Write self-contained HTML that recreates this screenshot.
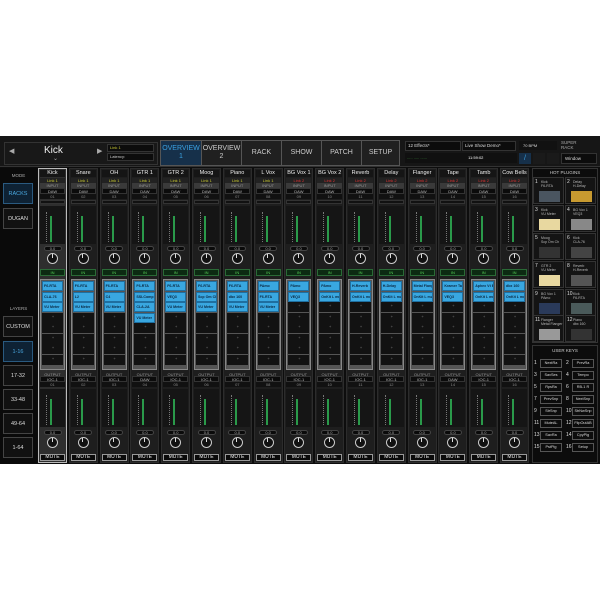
<!DOCTYPE html>
<html><head><meta charset="utf-8"><style>
*{box-sizing:border-box;margin:0;padding:0}
body{width:600px;height:600px;background:#fff;font-family:"Liberation Sans",sans-serif;position:relative;overflow:hidden;color:#ddd}
#app{position:absolute;left:0;top:136px;width:600px;height:328px;background:#0d0d0d}
.abs{position:absolute}
#top{position:absolute;left:0;top:0;width:600px;height:31px;background:#161616;border-bottom:1px solid #333}
.tab{position:absolute;top:5px;height:24px;font-size:7px;color:#ccc;text-align:center;line-height:24px;border-left:1px solid #555}
.mode{position:absolute;left:3px;width:30px;height:21px;border:1px solid #444;font-size:5.5px;text-align:center;line-height:20px;color:#ddd;background:#111}
#strips{position:absolute;left:38px;top:32px;width:494px;height:296px}
.s{position:absolute;top:0;width:29px;height:295px;background:#1e1e1e;border:1px solid #2c2c2c}
.s.sel{background:#2e2e2e;border:1px solid #bbb}
.s>div{position:absolute;left:1px;right:1px;text-align:center;font-size:4px;line-height:5px;white-space:nowrap;overflow:hidden}
.nm{top:1px;height:7px;font-size:5.5px!important;line-height:7px!important;color:#eee;background:#151515}
.lk{top:9px;height:5px;color:#cc3;background:#222}
.lk.r{color:#d33}
.in{top:14px;height:5px;color:#999;background:#3a3a3a}
.dd{top:19px;height:6px;color:#bbb;background:#0b0b0b;border:1px solid #333}
.no{top:25px;height:5px;color:#888;background:#111}
.sm{top:31px;height:4px;background:#111;border:1px solid #333}
.mt{top:37px;height:38px;background:#151515}
.mt i{position:absolute;left:6px;top:6px;width:2px;height:30px;border-left:1px dotted #777}
.mt b{position:absolute;left:10px;top:10px;width:2px;height:26px;background:#2a9a4a}
.pl{height:5px}
.pl span{display:inline-block;width:18px;height:5px;border-radius:3px;background:#0a0a0a;border:1px solid #444;color:#aaa;font-size:4px;line-height:4px}
.kn{height:12px;overflow:visible!important}
.kn span{display:inline-block;width:11px;height:11px;border-radius:50%;border:1.5px solid #ccc;background:#111;position:relative}
.kn span:after{content:"";position:absolute;left:3.5px;top:0;width:1px;height:4px;background:#ddd}
.on{top:100px;height:7px;background:#0c2a12;border:1px solid #2a6a36;color:#5c5!important;line-height:5px!important}
.pg{top:110px;height:91px;background:#555;border:1px solid #888;padding:1px}
.pg b,.pg u{display:block;height:10px;margin-bottom:0.5px;text-decoration:none;font-weight:bold;font-size:3.6px;line-height:9px;text-align:left;padding-left:1px;white-space:nowrap;overflow:hidden}
.pg b{background:#39a7e0;color:#0b2740;border:1px solid #1f6fa0}
.pg u{background:#121212;color:#555;text-align:center}
.out{top:203px;height:4px;color:#999}
.d2{top:207px}
.n2{top:213px}
.m2{top:220px}
.p2{top:261px}
.k2{top:268px}
.mu{top:285px;height:7px;background:#0a0a0a;border:1px solid #999;color:#eee!important;font-size:5px!important;line-height:5px!important}
#rp{position:absolute;left:532px;top:32px;width:66px;height:295px}
.hp{position:absolute;width:31px;height:27px;background:#141414;border:1px solid #333}
.hp em{position:absolute;left:1px;top:1px;font-style:normal;font-size:5px;color:#ddd}
.hp i{position:absolute;left:7px;top:2px;font-style:normal;font-size:3.5px;color:#bbb;line-height:4px;white-space:nowrap}
.hp s{position:absolute;left:5px;top:13px;width:21px;height:11px}
.uk{position:absolute;height:11px;font-size:5px;line-height:11px;color:#ddd}
.uk span{position:absolute;left:6px;width:22px;height:9px;top:1px;border:1px solid #555;background:#0c0c0c;font-size:3.8px;line-height:7px;text-align:center;white-space:nowrap}
</style></head><body>
<div id="app">
<div id="top">
 <div class="abs" style="left:4px;top:6px;width:154px;height:23px;border:1px solid #333;background:#181818"></div>
 <div class="abs" style="left:9px;top:11px;font-size:7px;color:#aaa">&#9664;</div>
 <div class="abs" style="left:44px;top:9px;font-size:10px;color:#eee">Kick</div>
 <div class="abs" style="left:53px;top:19px;font-size:6px;color:#aaa">&#8964;</div>
 <div class="abs" style="left:97px;top:11px;font-size:7px;color:#aaa">&#9654;</div>
 <div class="abs" style="left:107px;top:8px;width:47px;height:8px;border:1px solid #333;background:#0c0c0c;font-size:4px;color:#cc3;line-height:6px;padding-left:2px">Link 1</div>
 <div class="abs" style="left:107px;top:17px;width:47px;height:8px;border:1px solid #333;background:#0c0c0c;font-size:4px;color:#ccc;line-height:6px;padding-left:2px">Latency:</div>
 <div class="abs" style="left:160px;top:4px;width:240px;height:26px;border:1px solid #555;background:#202020"></div>
 <div class="tab" style="left:161px;width:40px;background:#16304a;color:#3aa0e0;border:none;line-height:8px;padding-top:4px">OVERVIEW<br>1</div>
 <div class="tab" style="left:201px;width:40px;line-height:8px;padding-top:4px">OVERVIEW<br>2</div>
 <div class="tab" style="left:241px;width:40px">RACK</div>
 <div class="tab" style="left:281px;width:40px">SHOW</div>
 <div class="tab" style="left:321px;width:40px">PATCH</div>
 <div class="tab" style="left:361px;width:38px">SETUP</div>
 <div class="abs" style="left:405px;top:5px;width:56px;height:10px;border:1px solid #333;background:#0c0c0c;font-size:4.5px;line-height:8px;padding-left:2px">12 Effects*</div>
 <div class="abs" style="left:462px;top:5px;width:54px;height:10px;border:1px solid #333;background:#0c0c0c;font-size:4.5px;line-height:8px;padding-left:2px">Live Show Demo*</div>
 <div class="abs" style="left:405px;top:17px;width:112px;height:10px;background:#101010;font-size:4px;color:#4a4;line-height:10px;padding-left:2px">..... ..... ...... <span style="color:#fff;margin-left:40px">11:59:02</span></div>
 <div class="abs" style="left:519px;top:5px;width:38px;height:9px;background:#111;font-size:4px;line-height:9px;padding-left:4px">70 BPM</div>
 <div class="abs" style="left:561px;top:4px;width:36px;height:11px;font-size:4.5px;color:#aaa;line-height:5px">SUPER<br>RACK</div>
 <div class="abs" style="left:519px;top:17px;width:12px;height:11px;background:#16304a;color:#3aa0e0;font-size:7px;text-align:center;line-height:11px">/</div>
 <div class="abs" style="left:533px;top:17px;width:12px;height:11px;background:#1a1a1a"></div>
 <div class="abs" style="left:547px;top:17px;width:12px;height:11px;background:#1a1a1a"></div>
 <div class="abs" style="left:561px;top:17px;width:36px;height:11px;background:#0c0c0c;border:1px solid #333;font-size:4.5px;line-height:9px;padding-left:3px">Window</div>
</div>
<div class="abs" style="left:0;top:32px;width:37px;height:296px;background:#0a0a0a">
 <div class="abs" style="left:0;top:5px;width:37px;text-align:center;font-size:4.5px;color:#aaa">MODE</div>
 <div class="mode" style="top:15px;border-color:#2a5a80;background:#0e2234;color:#4aa8e0">RACKS</div>
 <div class="mode" style="top:40px">DUGAN</div>
 <div class="abs" style="left:0;top:138px;width:37px;text-align:center;font-size:4.5px;color:#aaa">LAYERS</div>
 <div class="mode" style="top:148px">CUSTOM</div>
 <div class="mode" style="top:173px;border-color:#2a5a80;background:#0e2234;color:#4aa8e0">1-16</div>
 <div class="mode" style="top:197px">17-32</div>
 <div class="mode" style="top:221px">33-48</div>
 <div class="mode" style="top:245px">49-64</div>
 <div class="mode" style="top:269px">1-64</div>
</div>
<div id="strips">
<div class="s sel" style="left:0"><div class="nm">Kick</div><div class="lk">Link 1</div><div class="in">INPUT</div><div class="dd">DAW</div><div class="no">01</div><div class="sm"></div><div class="mt"><i></i><b></b></div><div class="pl" style="top:77px"><span>0.0</span></div><div class="kn" style="top:84px"><span></span></div><div class="on">IN</div><div class="pg"><b>F6-RTA</b><b>CLA-76</b><b>VU Meter</b><u>+</u><u>+</u><u>+</u><u>+</u><u>+</u></div><div class="out">OUTPUT</div><div class="dd d2">IOC-1</div><div class="no n2">01</div><div class="mt m2"><i></i><b></b></div><div class="pl p2"><span>0.0</span></div><div class="kn k2"><span></span></div><div class="mu">MUTE</div></div>
<div class="s" style="left:30.8px"><div class="nm">Snare</div><div class="lk">Link 1</div><div class="in">INPUT</div><div class="dd">DAW</div><div class="no">02</div><div class="sm"></div><div class="mt"><i></i><b></b></div><div class="pl" style="top:77px"><span>0.0</span></div><div class="kn" style="top:84px"><span></span></div><div class="on">IN</div><div class="pg"><b>F6-RTA</b><b>L2</b><b>VU Meter</b><u>+</u><u>+</u><u>+</u><u>+</u><u>+</u></div><div class="out">OUTPUT</div><div class="dd d2">IOC-1</div><div class="no n2">02</div><div class="mt m2"><i></i><b></b></div><div class="pl p2"><span>0.0</span></div><div class="kn k2"><span></span></div><div class="mu">MUTE</div></div>
<div class="s" style="left:61.6px"><div class="nm">OH</div><div class="lk">Link 1</div><div class="in">INPUT</div><div class="dd">DAW</div><div class="no">03</div><div class="sm"></div><div class="mt"><i></i><b></b></div><div class="pl" style="top:77px"><span>0.0</span></div><div class="kn" style="top:84px"><span></span></div><div class="on">IN</div><div class="pg"><b>F6-RTA</b><b>C4</b><b>VU Meter</b><u>+</u><u>+</u><u>+</u><u>+</u><u>+</u></div><div class="out">OUTPUT</div><div class="dd d2">IOC-1</div><div class="no n2">03</div><div class="mt m2"><i></i><b></b></div><div class="pl p2"><span>0.0</span></div><div class="kn k2"><span></span></div><div class="mu">MUTE</div></div>
<div class="s" style="left:92.4px"><div class="nm">GTR 1</div><div class="lk">Link 1</div><div class="in">INPUT</div><div class="dd">DAW</div><div class="no">04</div><div class="sm"></div><div class="mt"><i></i><b></b></div><div class="pl" style="top:77px"><span>0.0</span></div><div class="kn" style="top:84px"><span></span></div><div class="on">IN</div><div class="pg"><b>F6-RTA</b><b>SSLComp</b><b>CLA-2A</b><b>VU Meter</b><u>+</u><u>+</u><u>+</u><u>+</u></div><div class="out">OUTPUT</div><div class="dd d2">DAW</div><div class="no n2">04</div><div class="mt m2"><i></i><b></b></div><div class="pl p2"><span>0.0</span></div><div class="kn k2"><span></span></div><div class="mu">MUTE</div></div>
<div class="s" style="left:123.2px"><div class="nm">GTR 2</div><div class="lk">Link 1</div><div class="in">INPUT</div><div class="dd">DAW</div><div class="no">05</div><div class="sm"></div><div class="mt"><i></i><b></b></div><div class="pl" style="top:77px"><span>0.0</span></div><div class="kn" style="top:84px"><span></span></div><div class="on">IN</div><div class="pg"><b>F6-RTA</b><b>VEQ3</b><b>VU Meter</b><u>+</u><u>+</u><u>+</u><u>+</u><u>+</u></div><div class="out">OUTPUT</div><div class="dd d2">IOC-1</div><div class="no n2">05</div><div class="mt m2"><i></i><b></b></div><div class="pl p2"><span>0.0</span></div><div class="kn k2"><span></span></div><div class="mu">MUTE</div></div>
<div class="s" style="left:154px"><div class="nm">Moog</div><div class="lk">Link 1</div><div class="in">INPUT</div><div class="dd">DAW</div><div class="no">06</div><div class="sm"></div><div class="mt"><i></i><b></b></div><div class="pl" style="top:77px"><span>0.0</span></div><div class="kn" style="top:84px"><span></span></div><div class="on">IN</div><div class="pg"><b>F6-RTA</b><b>Scp Om Ch</b><b>VU Meter</b><u>+</u><u>+</u><u>+</u><u>+</u><u>+</u></div><div class="out">OUTPUT</div><div class="dd d2">IOC-1</div><div class="no n2">06</div><div class="mt m2"><i></i><b></b></div><div class="pl p2"><span>0.0</span></div><div class="kn k2"><span></span></div><div class="mu">MUTE</div></div>
<div class="s" style="left:184.8px"><div class="nm">Piano</div><div class="lk">Link 1</div><div class="in">INPUT</div><div class="dd">DAW</div><div class="no">07</div><div class="sm"></div><div class="mt"><i></i><b></b></div><div class="pl" style="top:77px"><span>0.0</span></div><div class="kn" style="top:84px"><span></span></div><div class="on">IN</div><div class="pg"><b>F6-RTA</b><b>dbx 160</b><b>VU Meter</b><u>+</u><u>+</u><u>+</u><u>+</u><u>+</u></div><div class="out">OUTPUT</div><div class="dd d2">IOC-1</div><div class="no n2">07</div><div class="mt m2"><i></i><b></b></div><div class="pl p2"><span>0.0</span></div><div class="kn k2"><span></span></div><div class="mu">MUTE</div></div>
<div class="s" style="left:215.6px"><div class="nm">L Vox</div><div class="lk">Link 1</div><div class="in">INPUT</div><div class="dd">DAW</div><div class="no">08</div><div class="sm"></div><div class="mt"><i></i><b></b></div><div class="pl" style="top:77px"><span>0.0</span></div><div class="kn" style="top:84px"><span></span></div><div class="on">IN</div><div class="pg"><b>PAmo</b><b>F6-RTA</b><b>VU Meter</b><u>+</u><u>+</u><u>+</u><u>+</u><u>+</u></div><div class="out">OUTPUT</div><div class="dd d2">IOC-1</div><div class="no n2">08</div><div class="mt m2"><i></i><b></b></div><div class="pl p2"><span>0.0</span></div><div class="kn k2"><span></span></div><div class="mu">MUTE</div></div>
<div class="s" style="left:246.4px"><div class="nm">BG Vox 1</div><div class="lk r">Link 2</div><div class="in">INPUT</div><div class="dd">DAW</div><div class="no">09</div><div class="sm"></div><div class="mt"><i></i><b></b></div><div class="pl" style="top:77px"><span>0.0</span></div><div class="kn" style="top:84px"><span></span></div><div class="on">IN</div><div class="pg"><b>PAmo</b><b>VEQ3</b><u>+</u><u>+</u><u>+</u><u>+</u><u>+</u><u>+</u></div><div class="out">OUTPUT</div><div class="dd d2">IOC-1</div><div class="no n2">09</div><div class="mt m2"><i></i><b></b></div><div class="pl p2"><span>0.0</span></div><div class="kn k2"><span></span></div><div class="mu">MUTE</div></div>
<div class="s" style="left:277.2px"><div class="nm">BG Vox 2</div><div class="lk r">Link 2</div><div class="in">INPUT</div><div class="dd">DAW</div><div class="no">10</div><div class="sm"></div><div class="mt"><i></i><b></b></div><div class="pl" style="top:77px"><span>0.0</span></div><div class="kn" style="top:84px"><span></span></div><div class="on">IN</div><div class="pg"><b>PAmo</b><b>OnKit L mult</b><u>+</u><u>+</u><u>+</u><u>+</u><u>+</u><u>+</u></div><div class="out">OUTPUT</div><div class="dd d2">IOC-1</div><div class="no n2">10</div><div class="mt m2"><i></i><b></b></div><div class="pl p2"><span>0.0</span></div><div class="kn k2"><span></span></div><div class="mu">MUTE</div></div>
<div class="s" style="left:308px"><div class="nm">Reverb</div><div class="lk r">Link 2</div><div class="in">INPUT</div><div class="dd">DAW</div><div class="no">11</div><div class="sm"></div><div class="mt"><i></i><b></b></div><div class="pl" style="top:77px"><span>0.0</span></div><div class="kn" style="top:84px"><span></span></div><div class="on">IN</div><div class="pg"><b>H-Reverb</b><b>OnKit L mult</b><u>+</u><u>+</u><u>+</u><u>+</u><u>+</u><u>+</u></div><div class="out">OUTPUT</div><div class="dd d2">IOC-1</div><div class="no n2">11</div><div class="mt m2"><i></i><b></b></div><div class="pl p2"><span>0.0</span></div><div class="kn k2"><span></span></div><div class="mu">MUTE</div></div>
<div class="s" style="left:338.8px"><div class="nm">Delay</div><div class="lk r">Link 2</div><div class="in">INPUT</div><div class="dd">DAW</div><div class="no">12</div><div class="sm"></div><div class="mt"><i></i><b></b></div><div class="pl" style="top:77px"><span>0.0</span></div><div class="kn" style="top:84px"><span></span></div><div class="on">IN</div><div class="pg"><b>H-Delay</b><b>OnKit L mult</b><u>+</u><u>+</u><u>+</u><u>+</u><u>+</u><u>+</u></div><div class="out">OUTPUT</div><div class="dd d2">IOC-1</div><div class="no n2">12</div><div class="mt m2"><i></i><b></b></div><div class="pl p2"><span>0.0</span></div><div class="kn k2"><span></span></div><div class="mu">MUTE</div></div>
<div class="s" style="left:369.6px"><div class="nm">Flanger</div><div class="lk r">Link 2</div><div class="in">INPUT</div><div class="dd">DAW</div><div class="no">13</div><div class="sm"></div><div class="mt"><i></i><b></b></div><div class="pl" style="top:77px"><span>0.0</span></div><div class="kn" style="top:84px"><span></span></div><div class="on">IN</div><div class="pg"><b>Metal Flanger</b><b>OnKit L mult</b><u>+</u><u>+</u><u>+</u><u>+</u><u>+</u><u>+</u></div><div class="out">OUTPUT</div><div class="dd d2">IOC-1</div><div class="no n2">13</div><div class="mt m2"><i></i><b></b></div><div class="pl p2"><span>0.0</span></div><div class="kn k2"><span></span></div><div class="mu">MUTE</div></div>
<div class="s" style="left:400.4px"><div class="nm">Tape</div><div class="lk r">Link 2</div><div class="in">INPUT</div><div class="dd">DAW</div><div class="no">14</div><div class="sm"></div><div class="mt"><i></i><b></b></div><div class="pl" style="top:77px"><span>0.0</span></div><div class="kn" style="top:84px"><span></span></div><div class="on">IN</div><div class="pg"><b>Kramer Tape</b><b>VEQ3</b><u>+</u><u>+</u><u>+</u><u>+</u><u>+</u><u>+</u></div><div class="out">OUTPUT</div><div class="dd d2">DAW</div><div class="no n2">14</div><div class="mt m2"><i></i><b></b></div><div class="pl p2"><span>0.0</span></div><div class="kn k2"><span></span></div><div class="mu">MUTE</div></div>
<div class="s" style="left:431.2px"><div class="nm">Tamb</div><div class="lk r">Link 2</div><div class="in">INPUT</div><div class="dd">DAW</div><div class="no">15</div><div class="sm"></div><div class="mt"><i></i><b></b></div><div class="pl" style="top:77px"><span>0.0</span></div><div class="kn" style="top:84px"><span></span></div><div class="on">IN</div><div class="pg"><b>Aphex Vt Ext</b><b>OnKit L mult</b><u>+</u><u>+</u><u>+</u><u>+</u><u>+</u><u>+</u></div><div class="out">OUTPUT</div><div class="dd d2">IOC-1</div><div class="no n2">15</div><div class="mt m2"><i></i><b></b></div><div class="pl p2"><span>0.0</span></div><div class="kn k2"><span></span></div><div class="mu">MUTE</div></div>
<div class="s" style="left:462px"><div class="nm">Cow Bells</div><div class="lk r">Link 2</div><div class="in">INPUT</div><div class="dd">DAW</div><div class="no">16</div><div class="sm"></div><div class="mt"><i></i><b></b></div><div class="pl" style="top:77px"><span>0.0</span></div><div class="kn" style="top:84px"><span></span></div><div class="on">IN</div><div class="pg"><b>dbx 160</b><b>OnKit L mult</b><u>+</u><u>+</u><u>+</u><u>+</u><u>+</u><u>+</u></div><div class="out">OUTPUT</div><div class="dd d2">IOC-1</div><div class="no n2">16</div><div class="mt m2"><i></i><b></b></div><div class="pl p2"><span>0.0</span></div><div class="kn k2"><span></span></div><div class="mu">MUTE</div></div>
</div>
<div id="rp">
 <div class="abs" style="left:0;top:0;width:66px;height:175px;border:1px solid #333;background:#0c0c0c"></div>
 <div class="abs" style="left:0;top:2px;width:66px;text-align:center;font-size:4.5px;color:#ccc">HOT PLUGINS</div>
 <div class="hp" style="left:1px;top:9px"><em>1</em><i>Kick<br>F6-RTA</i><s style="background:#4a5560"></s></div>
 <div class="hp" style="left:33px;top:9px"><em>2</em><i>Delay<br>H-Delay</i><s style="background:#c89a30"></s></div>
 <div class="hp" style="left:1px;top:37px"><em>3</em><i>Kick<br>VU Meter</i><s style="background:#e8d8a0"></s></div>
 <div class="hp" style="left:33px;top:37px"><em>4</em><i>BG Vox 1<br>VEQ3</i><s style="background:#888"></s></div>
 <div class="hp" style="left:1px;top:65px"><em>5</em><i>Moog<br>Scp Om Ch</i><s style="background:#333"></s></div>
 <div class="hp" style="left:33px;top:65px"><em>6</em><i>Kick<br>CLA-76</i><s style="background:#444"></s></div>
 <div class="hp" style="left:1px;top:93px"><em>7</em><i>GTR 2<br>VU Meter</i><s style="background:#e8d8a0"></s></div>
 <div class="hp" style="left:33px;top:93px"><em>8</em><i>Reverb<br>H-Reverb</i><s style="background:#555"></s></div>
 <div class="hp" style="left:1px;top:121px"><em>9</em><i>BG Vox 1<br>PAmo</i><s style="background:#2a3a5a"></s></div>
 <div class="hp" style="left:33px;top:121px"><em>10</em><i>Kick<br>F6-RTA</i><s style="background:#4a5a5a"></s></div>
 <div class="hp" style="left:1px;top:147px"><em>11</em><i>Flanger<br>Metal Flanger</i><s style="background:#999"></s></div>
 <div class="hp" style="left:33px;top:147px"><em>12</em><i>Piano<br>dbx 160</i><s style="background:#333"></s></div>
 <div class="abs" style="left:0;top:177px;width:66px;height:118px;border:1px solid #333;background:#0c0c0c"></div>
 <div class="abs" style="left:0;top:180px;width:66px;text-align:center;font-size:4.5px;color:#ccc">USER KEYS</div>
 <div class="uk" style="left:2px;top:190px">1<span>NextRa</span></div><div class="uk" style="left:34px;top:190px">2<span>PrevRa</span></div>
 <div class="uk" style="left:2px;top:202px">3<span>SavSes</span></div><div class="uk" style="left:34px;top:202px">4<span>Tempo</span></div>
 <div class="uk" style="left:2px;top:214px">5<span>RpsRa</span></div><div class="uk" style="left:34px;top:214px">6<span>RB-1 R</span></div>
 <div class="uk" style="left:2px;top:226px">7<span>PrevSnp</span></div><div class="uk" style="left:34px;top:226px">8<span>NextSnp</span></div>
 <div class="uk" style="left:2px;top:238px">9<span>StrSnp</span></div><div class="uk" style="left:34px;top:238px">10<span>StrNwSnp</span></div>
 <div class="uk" style="left:2px;top:250px">11<span>MuteAL</span></div><div class="uk" style="left:34px;top:250px">12<span>FlipOutAB</span></div>
 <div class="uk" style="left:2px;top:262px">13<span>SavRa</span></div><div class="uk" style="left:34px;top:262px">14<span>CpyPlg</span></div>
 <div class="uk" style="left:2px;top:274px">15<span>PstPlg</span></div><div class="uk" style="left:34px;top:274px">16<span>Setup</span></div>
</div>
</div>
</body></html>
